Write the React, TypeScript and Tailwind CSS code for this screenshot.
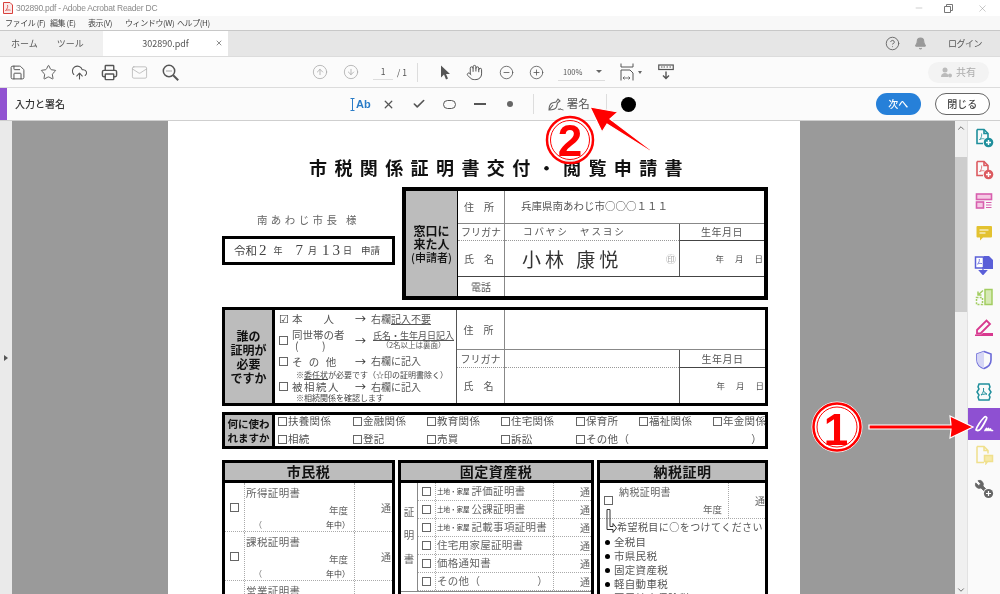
import React from 'react';
import {
  Save, Star, CloudUpload, Printer, Mail, CircleArrowUp, CircleArrowDown,
  Hand, CircleMinus, CirclePlus, CircleHelp, Bell, X, Check, Minus, Wrench, ChevronUp, ChevronDown,
} from 'lucide-react';

const DocPlus: React.FC<{ color: string }> = ({ color }) => (
  <svg width="20" height="20" viewBox="0 0 20 20" fill="none" stroke={color} strokeWidth="1.6">
    <path d="M3 1.5h7l4 4v5M3 1.5v14h6" />
    <path d="M10 1.5v4h4" />
    <path d="M5.5 12c2-2 2.5-5 2-6.5M5.5 11.5c2-1 4-1 5-.5" strokeWidth="0.8" />
    <circle cx="14.5" cy="14.5" r="4.8" fill={color} stroke="none" />
    <path d="M12 14.5h5M14.5 12v5" stroke="#fff" strokeWidth="1.4" />
  </svg>
);

const RailIcons: { key: string; node: React.ReactNode }[] = [
  { key: 'create', node: <DocPlus color="#1f8f9c" /> },
  { key: 'combine', node: <DocPlus color="#dc5a60" /> },
  {
    key: 'layout',
    node: (
      <svg width="18" height="18" viewBox="0 0 18 18" fill="none" stroke="#d85fae" strokeWidth="1.6">
        <rect x="1.5" y="2" width="15" height="5.5" fill="#f5c9e4" />
        <rect x="1.5" y="10" width="7" height="6" fill="#f5c9e4" />
        <path d="M11 10.5h5.5M11 13h5.5M11 15.5h5.5" strokeWidth="1" />
      </svg>
    ),
  },
  {
    key: 'comment',
    node: (
      <svg width="18" height="18" viewBox="0 0 18 18">
        <path d="M2.5 2h13.5a1 1 0 0 1 1 1v9.5a1 1 0 0 1-1 1H8l-3 3v-3H2.5a1 1 0 0 1-1-1V3a1 1 0 0 1 1-1z" fill="#e3c230" />
        <path d="M4.5 6h9M4.5 9h6" stroke="#fff" strokeWidth="1.2" />
      </svg>
    ),
  },
  {
    key: 'export',
    node: (
      <svg width="20" height="20" viewBox="0 0 20 20">
        <path d="M10 1h5l4 4v9h-9z" fill="#5a5fd8" />
        <path d="M1.5 2h8v11h-8z" fill="#fff" stroke="#5a5fd8" strokeWidth="1.5" />
        <path d="M3.5 9c1.5-1 2-3 1.8-5M3.5 9c1.5-.6 3-.8 4.5-.4" stroke="#5a5fd8" strokeWidth="0.8" fill="none" />
        <path d="M9 12v4M5.5 15.5h7L9 19.5z" fill="#5a5fd8" stroke="#5a5fd8" strokeWidth="1.2" />
      </svg>
    ),
  },
  {
    key: 'organize',
    node: (
      <svg width="18" height="18" viewBox="0 0 18 18" fill="none" stroke="#a2cd61" strokeWidth="1.5">
        <rect x="10" y="1.5" width="7" height="15" fill="#d6eab4" />
        <path d="M1.5 9.5h6v7h-6z" strokeDasharray="2 1.2" />
        <path d="M8 2.5L3 7M3 3.5V7h3.5" />
      </svg>
    ),
  },
  {
    key: 'fill',
    node: (
      <svg width="20" height="18" viewBox="0 0 20 18">
        <path d="M3 11L12.5 1.5 16 5 6.5 14.5H3z" fill="none" stroke="#d8398f" strokeWidth="1.8" />
        <path d="M9 14h10v3H1v-1.5h6z" fill="#d8398f" />
      </svg>
    ),
  },
  {
    key: 'protect',
    node: (
      <svg width="18" height="20" viewBox="0 0 18 20">
        <path d="M9 1.5l7 2.5v6c0 4-3 7-7 8.5-4-1.5-7-4.500-7-8.5V4z" fill="none" stroke="#6b6ad8" strokeWidth="1.6" />
        <path d="M9 1.5v17c-4-1.5-7-4.500-7-8.5V4z" fill="#d6d6f5" />
      </svg>
    ),
  },
  {
    key: 'optimize',
    node: (
      <svg width="20" height="20" viewBox="0 0 20 20" fill="none" stroke="#1f8f9c" strokeWidth="1.5">
        <path d="M5 2h10l1 3-1 2 2 3-2 3 1 2-1 3H5l-1-3 1-2-2-3 2-3-1-2z" />
        <path d="M7 13c2-2 3-4 2.5-7M7 13c2-.8 4-1.2 6-.8M9.5 9c.8 1.2 2 2.4 3.5 3.2" strokeWidth="1" />
      </svg>
    ),
  },
  {
    key: 'sign',
    node: (
      <svg width="20" height="20" viewBox="0 0 20 20" fill="none" stroke="#fff" strokeWidth="1.7" strokeLinecap="round" strokeLinejoin="round">
        <path d="M2 16c.5-3 5-9.5 8-12.5 1.5-1.5 3.5-.5 2.5 1.5-1.5 3-4 7.5-5.5 9.5-1 1.5-3 2.5-5 1.5z" />
        <path d="M11 16.5l1.5-2 .5 2 1.5-2 .5 2 1.5-1.5.5 1.5h1.5" />
      </svg>
    ),
  },
  {
    key: 'send',
    node: (
      <svg width="20" height="20" viewBox="0 0 20 20" fill="none" stroke="#f0e08c" strokeWidth="1.5">
        <path d="M3 1.5h7l4 4v3M3 1.5v16h7M10 1.5v4h4" />
        <path d="M10.5 10.5h8v6h-5l-1.5 2v-2h-1.5z" fill="#f6eaa8" />
      </svg>
    ),
  },
  {
    key: 'tools',
    node: (
      <span className="relative mt-[3px] block h-[20px] w-[20px]">
        <Wrench size={16} className="absolute left-0 top-0 -scale-x-100 text-[#666]" fill="#666" strokeWidth={1.2} />
        <svg className="absolute bottom-0 right-0" width="11" height="11" viewBox="0 0 11 11">
          <circle cx="5.5" cy="5.5" r="5.5" fill="#fafafa" />
          <circle cx="5.5" cy="5.5" r="4.6" fill="#666" />
          <path d="M3 5.5h5M5.5 3v5" stroke="#fff" strokeWidth="1.2" />
        </svg>
      </span>
    ),
  },
];

const Box = () => <span className="inline-block h-[9px] w-[9px] shrink-0 border border-[#666]" />;

const PurposeRow: React.FC<{ items: string[] }> = ({ items }) => (
  <div className="grid h-[13px] grid-cols-[75px_74px_74px_75px_63px_74px_1fr] items-center pl-[3px] text-[10.5px] leading-none text-[#555]">
    {items.map((it, i) => (
      <span key={i} className="flex items-center gap-[1px] whitespace-nowrap tracking-[0.3px]">
        {it !== '' && it !== '）' && <Box />}
        {it === '）' ? <span className="ml-auto pr-[3px]">）</span> : it}
      </span>
    ))}
  </div>
);

const WhoRow: React.FC<{ h: string; check?: React.ReactNode; mid: React.ReactNode; right?: React.ReactNode }> = ({ h, check, mid, right }) => (
  <div className={`grid grid-cols-[17px_63px_16px_1fr] items-center ${h}`}>
    <span className="flex justify-center">{check}</span>
    <div className="whitespace-nowrap text-[10.5px] leading-[11px] text-[#555]">{mid}</div>
    {right ? <span className="text-[11px] leading-none text-[#333]">→</span> : <span />}
    <div className="whitespace-nowrap text-[10px] leading-[10px] text-[#555]">{right}</div>
  </div>
);

const Note: React.FC<{ h: string; children: React.ReactNode }> = ({ h, children }) => (
  <div className={`flex items-center whitespace-nowrap pl-[21px] text-[8px] leading-none text-[#444] ${h}`}>{children}</div>
);

const TaxHead: React.FC<{ title: string }> = ({ title }) => (
  <div className="flex h-[23px] items-center justify-center border-[3px] border-black bg-[#bcbcbc] text-[14px] font-bold tracking-[0.5px] text-[#111]">
    {title}
  </div>
);

const CityRow: React.FC<{ title: string; h: string }> = ({ title, h }) => (
  <div className={`grid grid-cols-[20px_110px_1fr] border-b border-dotted border-[#aaa] ${h}`}>
    <span className="flex items-center justify-center border-r border-dotted border-[#aaa]"><Box /></span>
    <div className="flex flex-col border-r border-dotted border-[#aaa] px-[1px] text-[#666]">
      <span className="mt-[4px] text-[10.5px] leading-[12px] tracking-[0.4px]">{title}</span>
      <span className="mt-[6px] pr-[5px] text-right text-[9.5px] leading-[11px]">年度</span>
      <span className="mt-[4px] flex justify-between pl-[8px] pr-[3px] text-[8px] leading-[10px]"><span>（</span><span className="text-[#333]">年中）</span></span>
    </div>
    <span className="flex items-center justify-end pr-[1px] text-[10px] text-[#666]">通</span>
  </div>
);

const AssetRow: React.FC<{ children: React.ReactNode }> = ({ children }) => (
  <div className="grid h-[18px] grid-cols-[18px_118px_1fr] border-b border-dotted border-[#aaa]">
    <span className="flex items-center justify-center border-r border-dotted border-[#aaa]"><Box /></span>
    <div className="flex items-center gap-[2px] whitespace-nowrap border-r border-dotted border-[#aaa] pl-[1px] text-[10.5px] leading-none tracking-[0.3px] text-[#666]">{children}</div>
    <span className="flex items-center justify-end pr-[1px] text-[10px] leading-none text-[#666]">通</span>
  </div>
);

const Land = () => <span className="text-[6.5px] tracking-normal text-[#333]">土地・家屋</span>;

const Annotations = () => (
  <svg className="pointer-events-none absolute left-0 top-0" width="1000" height="594" viewBox="0 0 1000 594">
    <g>
      <path d="M651 150L610 119 618 112 590 107 602 132 607 124 650 151z" fill="#f00" stroke="#fff" strokeWidth="1.2" />
      <circle cx="570" cy="140" r="23" fill="#fff" fillOpacity="0.9" stroke="#f00" strokeWidth="2.5" />
      <circle cx="570" cy="140" r="19.5" fill="none" stroke="#f00" strokeWidth="1" />
      <text x="570" y="156" textAnchor="middle" fontSize="44" fontWeight="700" fill="#f00" fontFamily="'Liberation Sans', sans-serif">2</text>
    </g>
    <g>
      <path d="M869 425L951 425 950 416 973 427 950 438 951 429 869 429z" fill="#f00" stroke="#fff" strokeWidth="1.2" />
      <circle cx="837" cy="427" r="25" fill="#fff" stroke="#fff" />
      <circle cx="837" cy="427" r="23.5" fill="none" stroke="#f00" strokeWidth="2.5" />
      <circle cx="837" cy="427" r="20" fill="none" stroke="#f00" strokeWidth="1" />
      <text x="836" y="445" textAnchor="middle" fontSize="44" fontWeight="700" fill="#f00" fontFamily="'Liberation Sans', sans-serif">1</text>
    </g>
  </svg>
);

const App: React.FC = () => {
  return (
    <div className="relative flex h-[594px] w-[1000px] flex-col overflow-hidden bg-white font-['Noto_Sans_CJK_JP','Noto_Sans',sans-serif] blur-[0.4px]">
      {/* title bar */}
      <div className="flex h-[16px] shrink-0 items-center bg-white pl-[3px] text-[#8a8a8a]">
        <svg width="10" height="12" viewBox="0 0 10 12" fill="none" stroke="#d8413c">
          <path d="M.5.5h6.5l2.5 2.5v8.500h-9z" fill="#fbeaea" />
          <path d="M2.5 8.5c2-1.5 2.5-4 2-5.500M2.500 8.500c1.500-.6 3.500-.8 5-.3" strokeWidth="0.8" />
        </svg>
        <span className="ml-[3px] whitespace-nowrap font-['Liberation_Sans'] text-[8.5px] leading-none tracking-[-0.25px]">302890.pdf - Adobe Acrobat Reader DC</span>
        <div className="ml-auto flex items-center">
          <Minus size={10} strokeWidth={1} className="mr-[20px]" />
          <svg width="9" height="9" viewBox="0 0 9 9" fill="none" stroke="#777" className="mr-[24px]"><path d="M.5 2.5h6v6h-6zM2.500 2.500v-2h6v6h-2" /></svg>
          <X size={11} strokeWidth={1} className="mr-[12px]" />
        </div>
      </div>
      {/* menu */}
      <div className="flex h-[14px] shrink-0 items-center bg-[#f8f8f8] pl-[5px] text-[8px] leading-none tracking-[-0.4px] text-[#444]">
        <span className="w-[45px]">ファイル (F)</span>
        <span className="w-[38px]">編集 (E)</span>
        <span className="w-[37px]">表示(V)</span>
        <span className="w-[52px]">ウィンドウ(W)</span>
        <span>ヘルプ(H)</span>
      </div>
      {/* tabs */}
      <div className="flex h-[26px] shrink-0 items-stretch border-t border-[#c8c8c8] bg-[#e6e6e6]">
        <div className="flex w-[103px] items-center gap-[19px] bg-[#f0f0f0] pl-[11px] text-[9px] leading-none text-[#555]">
          <span>ホーム</span><span>ツール</span>
        </div>
        <div className="relative flex w-[125px] items-center justify-center bg-white text-[9px] leading-none text-[#555]">
          302890.pdf
          <X size={8} strokeWidth={2} className="absolute right-[5px] top-[8px] text-[#555]" />
        </div>
        <div className="ml-auto flex items-center pr-[18px] text-[#666]">
          <CircleHelp size={15} strokeWidth={1.5} />
          <Bell size={13} fill="#999" className="ml-[14px] text-[#999]" />
          <span className="ml-[21px] text-[9px] leading-none tracking-[-0.5px] text-[#555]">ログイン</span>
        </div>
      </div>
      {/* main toolbar */}
      <div className="flex h-[32px] shrink-0 items-center border-y border-[#dcdcdc] bg-[#fbfbfb] text-[#555]">
        <Save size={17} strokeWidth={1.4} className="ml-[9px]" />
        <Star size={17} strokeWidth={1.3} className="ml-[14px]" />
        <CloudUpload size={17} strokeWidth={1.5} className="ml-[14px]" />
        <Printer size={17} strokeWidth={2} className="ml-[13px]" />
        <Mail size={17} strokeWidth={1} className="ml-[13px] text-[#aaa]" />
        <svg width="17" height="17" viewBox="0 0 17 17" fill="none" stroke="#555" strokeWidth="1.5" className="ml-[14px]">
          <circle cx="7" cy="7" r="5.7" />
          <path d="M11.2 11.2l5 5" strokeWidth="2" />
          <path d="M4.5 7h1M6.5 7h1M8.5 7h1" strokeWidth="1.1" />
        </svg>
        <CircleArrowUp size={16} strokeWidth={1.2} className="ml-[133px] text-[#aaa]" />
        <CircleArrowDown size={16} strokeWidth={1.2} className="ml-[15px] text-[#aaa]" />
        <span className="ml-[14px] flex h-[16px] w-[20px] items-center justify-center border-b border-[#ddd] text-[8.5px] leading-none">1</span>
        <span className="ml-[4px] whitespace-nowrap text-[8.5px] leading-none">/ 1</span>
        <span className="ml-[10px] h-[19px] w-px bg-[#ddd]" />
        <svg width="10" height="15" viewBox="0 0 10 15" className="ml-[22px]"><path d="M1 .5v12l3-3 2 5 2-1-2-4.5h4z" fill="#555" /></svg>
        <Hand size={17} strokeWidth={1.4} className="ml-[16px]" />
        <CircleMinus size={15} strokeWidth={1.3} className="ml-[16px]" />
        <CirclePlus size={15} strokeWidth={1.3} className="ml-[15px]" />
        <div className="ml-[14px] flex h-[17px] w-[47px] items-center justify-between border-b border-[#ddd] pl-[5px] pr-[3px] text-[7.5px] leading-none">
          <span>100%</span>
          <span className="h-0 w-0 border-x-[3px] border-t-[3px] border-x-transparent border-t-[#666]" />
        </div>
        <svg width="15" height="18" viewBox="0 0 15 18" fill="none" stroke="#555" className="ml-[15px]">
          <path d="M1 .5v3.5h12V.5M1 17.5V7h9l3 3v7.5" />
          <path d="M3 15h7M3 15l1.5-1.5M3 15l1.5 1.5M10 15l-1.5-1.5M10 15l-1.5 1.5" strokeWidth="0.8" />
        </svg>
        <span className="ml-[3px] h-0 w-0 border-x-[2.5px] border-t-[3px] border-x-transparent border-t-[#666]" />
        <svg width="16" height="16" viewBox="0 0 16 16" fill="none" stroke="#555" className="ml-[16px]">
          <rect x=".75" y="1" width="14.5" height="4.5" strokeWidth="1.2" />
          <path d="M3 3h1.5M5.5 3H7M8.5 3H10M11.5 3H13" strokeWidth="1" />
          <path d="M8 7.5v7M5 11.5l3 3 3-3" strokeWidth="1.4" />
        </svg>
        <div className="ml-auto mr-[11px] flex h-[21px] w-[61px] items-center justify-center gap-[4px] rounded-full bg-[#f3f3f3] text-[10px] leading-none text-[#aaa]">
          <svg width="11" height="11" viewBox="0 0 11 11" fill="#bbb"><circle cx="4" cy="3" r="2.5" /><path d="M0 10c0-3 2-4 4-4s3 1 3 2v2z" /><circle cx="9" cy="8.5" r="2" /></svg>
          <span>共有</span>
        </div>
      </div>
      {/* fill & sign toolbar */}
      <div className="flex h-[33px] shrink-0 items-center border-b border-[#cfcfcf] bg-[#fbfbfb] text-[#555]">
        <span className="h-full w-[7px] bg-[#9153d1]" />
        <span className="ml-[8px] w-[47px] whitespace-nowrap text-[10px] font-medium leading-none text-[#333]">入力と署名</span>
        <span className="ml-[288px] flex items-center whitespace-nowrap font-['Liberation_Sans'] text-[11px] font-bold leading-none text-[#2a7cc7]">
          <svg width="5" height="13" viewBox="0 0 5 13" fill="none" stroke="#2a7cc7" className="mr-px"><path d="M.5.5h4M2.5.5v12M.5 12.5h4" /></svg>
          Ab
        </span>
        <X size={13} strokeWidth={2.4} className="ml-[11px]" />
        <Check size={14} strokeWidth={2.8} className="ml-[17px]" />
        <span className="ml-[17px] h-[9px] w-[13px] rounded-full border-[1.5px] border-[#555]" />
        <span className="ml-[18px] h-[2px] w-[12px] bg-[#555]" />
        <span className="ml-[21px] h-[6px] w-[6px] rounded-full bg-[#666]" />
        <span className="ml-[20px] h-[20px] w-px bg-[#ddd]" />
        <svg width="16" height="15" viewBox="0 0 16 15" fill="none" stroke="#666" strokeWidth="1.1" className="ml-[14px]">
          <path d="M1 13c0-3 1-6 3-7l4-1 2-3 2 2-2.5 2-1 4c-1 2-4 3-7.5 3zM1 13l4-5" />
          <path d="M10 13l1-1.5.5 1.5 1-1.5.5 1.5 1-1 .5 1h1" strokeWidth="0.8" />
        </svg>
        <span className="ml-[3px] text-[11.5px] leading-none text-[#555]">署名</span>
        <span className="ml-[16px] h-[20px] w-px bg-[#ddd]" />
        <span className="ml-[14px] h-[15px] w-[15px] rounded-full bg-black" />
        <span className="ml-[240px] flex h-[22px] w-[45px] items-center justify-center rounded-full bg-[#2680d9] text-[10px] font-medium leading-none text-white">次へ</span>
        <span className="ml-[14px] flex h-[22px] w-[55px] items-center justify-center rounded-full border border-[#666] bg-white text-[10px] font-medium leading-none text-[#444]">閉じる</span>
      </div>
      {/* body */}
      <div className="flex min-h-0 flex-1">
        <div className="flex w-[12px] shrink-0 items-center justify-center bg-[#eaeaea]">
          <span className="h-0 w-0 border-y-[3.5px] border-l-[4px] border-y-transparent border-l-[#555]" />
        </div>
        <div className="flex min-w-0 flex-1 justify-center overflow-hidden bg-[#9a9a9a]">
          <div className="ml-[1px] flex w-[632px] shrink-0 flex-col overflow-hidden bg-white pl-[54px] pr-[32px] pt-[33px]">
            <div className="flex h-[26px] shrink-0 items-center justify-center whitespace-nowrap pl-[9px] text-[18px] font-bold leading-none tracking-[7.4px] text-[#111]">
              市税関係証明書交付・閲覧申請書
            </div>
            {/* applicant */}
            <div className="mt-[7px] flex shrink-0">
              <div className="flex w-[180px] flex-col">
                <div className="mt-[26px] flex h-[14px] items-center justify-center whitespace-nowrap pr-[7px] text-[10.5px] leading-none tracking-[3.4px] text-[#666]">南あわじ市長 様</div>
                <div className="mt-[9px] flex h-[29px] w-[173px] items-center whitespace-nowrap border-[3px] border-black pl-[9px] text-[#444]">
                  <span className="text-[11.5px] leading-none">令和</span>
                  <span className="ml-[2px] font-['Liberation_Serif'] text-[15px] leading-none">2</span>
                  <span className="ml-[7px] text-[9px] leading-none">年</span>
                  <span className="ml-[13px] font-['Liberation_Serif'] text-[15px] leading-none">7</span>
                  <span className="ml-[5px] text-[9px] leading-none">月</span>
                  <span className="ml-[5px] font-['Liberation_Serif'] text-[15px] leading-none tracking-[3px]">13</span>
                  <span className="text-[9px] leading-none">日</span>
                  <span className="ml-[9px] text-[9.5px] leading-none">申請</span>
                </div>
              </div>
              <div className="flex h-[113px] w-[366px] border-4 border-black">
                <div className="flex w-[52px] items-center justify-center border-r border-black bg-[#bcbcbc] text-center text-[12px] font-bold leading-[13px] text-[#111]">
                  <span>窓口に<br />来た人<br /><span className="text-[11px] font-medium">(申請者)</span></span>
                </div>
                <div className="flex min-w-0 flex-1 flex-col text-[#555]">
                  <div className="flex h-[33px] border-b border-[#888]">
                    <span className="flex w-[47px] items-center justify-center border-r border-[#888] text-[10px] leading-none tracking-[4px]">住 所</span>
                    <span className="flex items-center pb-[1px] pl-[16px] text-[10.5px] leading-none">兵庫県南あわじ市○○○１１１</span>
                  </div>
                  <div className="flex h-[53px] border-b border-[#444]">
                    <div className="flex w-[47px] flex-col border-r border-[#888] text-center text-[10px] leading-none">
                      <span className="flex h-[17px] items-center justify-center border-b border-dotted border-[#999]">フリガナ</span>
                      <span className="flex flex-1 items-center justify-center tracking-[4px]">氏 名</span>
                    </div>
                    <div className="flex w-[175px] flex-col border-r border-[#555]">
                      <span className="flex h-[17px] items-center whitespace-nowrap border-b border-dotted border-[#999] pl-[18px] text-[9.5px] leading-none tracking-[1.9px]">コバヤシ　ヤスヨシ</span>
                      <div className="flex flex-1 items-center justify-between pl-[17px] pr-[3px]">
                        <span className="whitespace-nowrap text-[19px] leading-none tracking-[4px] text-[#333]">小林 康悦</span>
                        <span className="text-[10px] leading-none text-[#aaa]">㊞</span>
                      </div>
                    </div>
                    <div className="flex flex-1 flex-col">
                      <span className="flex h-[17px] items-center justify-center border-b border-[#444] text-[10px] leading-none tracking-[0.5px]">生年月日</span>
                      <span className="flex flex-1 items-center justify-end gap-[11px] pr-[1px] text-[8.5px] leading-none"><span>年</span><span>月</span><span>日</span></span>
                    </div>
                  </div>
                  <div className="flex flex-1">
                    <span className="flex w-[47px] items-center justify-center border-r border-[#888] text-[10px] leading-none">電話</span>
                  </div>
                </div>
              </div>
            </div>
            {/* who needs it */}
            <div className="mt-[7px] flex h-[99px] shrink-0 border-[3.5px] border-black">
              <div className="flex w-[50px] items-center justify-center border-r-[3px] border-black bg-[#bcbcbc] text-center text-[12px] font-bold leading-[14px] text-[#111]">
                <span>誰の<br />証明が<br />必要<br />ですか</span>
              </div>
              <div className="flex w-[182px] flex-col border-r border-[#555]">
                <WhoRow h="h-[17px]" check={<span className="text-[11px] leading-none text-[#333]">☑</span>} mid={<span>本　　人</span>} right={<span>右欄<u>記入不要</u></span>} />
                <WhoRow h="h-[26px]" check={<Box />} mid={<span>同世帯の者<br /><span className="pl-[3px]">(　　 )</span></span>} right={<span className="flex flex-col items-center text-[9px] leading-[9px]"><u>氏名・生年月日記入</u><span className="text-[7.5px]">（2名以上は裏面）</span></span>} />
                <WhoRow h="h-[16px]" check={<Box />} mid={<span className="tracking-[2px]">そ の 他</span>} right={<span>右欄に記入</span>} />
                <Note h="h-[11px]"><span>※<u>委任状</u>が必要です（☆印の証明書除く）</span></Note>
                <WhoRow h="h-[13px]" check={<Box />} mid={<span className="tracking-[1.5px]">被相続人</span>} right={<span>右欄に記入</span>} />
                <Note h="h-[10px]"><span>※相続関係を確認します</span></Note>
              </div>
              <div className="flex min-w-0 flex-1 flex-col text-[#555]">
                <div className="flex h-[40px] border-b border-[#888]">
                  <span className="flex w-[48px] items-center justify-center border-r border-[#888] text-[10px] leading-none tracking-[4px]">住 所</span>
                </div>
                <div className="flex flex-1">
                  <div className="flex w-[48px] flex-col border-r border-[#888] text-center text-[10px] leading-none">
                    <span className="flex h-[18px] items-center justify-center border-b border-dotted border-[#999]">フリガナ</span>
                    <span className="flex flex-1 items-center justify-center tracking-[4px]">氏 名</span>
                  </div>
                  <div className="flex w-[175px] flex-col border-r border-[#555]">
                    <span className="h-[18px] border-b border-dotted border-[#999]" />
                  </div>
                  <div className="flex flex-1 flex-col">
                    <span className="flex h-[18px] items-center justify-center border-b border-[#444] text-[10px] leading-none tracking-[0.5px]">生年月日</span>
                    <span className="flex flex-1 items-center justify-end gap-[11px] pr-[1px] text-[8.5px] leading-none"><span>年</span><span>月</span><span>日</span></span>
                  </div>
                </div>
              </div>
            </div>
            {/* purpose */}
            <div className="mt-[6px] flex h-[37px] shrink-0 border-[3px] border-black">
              <div className="flex w-[50px] items-center justify-center border-r-[3px] border-black bg-[#bcbcbc] text-center text-[10.5px] font-bold leading-[14px] text-[#111]">
                <span>何に使わ<br />れますか</span>
              </div>
              <div className="flex min-w-0 flex-1 flex-col justify-center gap-[5px]">
                <PurposeRow items={['扶養関係', '金融関係', '教育関係', '住宅関係', '保育所', '福祉関係', '年金関係']} />
                <PurposeRow items={['相続', '登記', '売買', '訴訟', 'その他（', '', '）']} />
              </div>
            </div>
            {/* tax columns */}
            <div className="mt-[11px] grid shrink-0 grid-cols-[173px_196px_171px] gap-x-[3px]">
              <div className="flex flex-col">
                <TaxHead title="市民税" />
                <div className="border-x-[3px] border-black">
                  <CityRow title="所得証明書" h="h-[49px]" />
                  <CityRow title="課税証明書" h="h-[49px]" />
                  <CityRow title="営業証明書" h="h-[40px]" />
                </div>
              </div>
              <div className="flex flex-col">
                <TaxHead title="固定資産税" />
                <div className="flex h-[120px] flex-col border-x-[3px] border-black">
                  <div className="flex border-b border-[#888]">
                    <div className="flex h-[108px] w-[17px] shrink-0 flex-col items-center justify-between border-r border-[#888] pb-[27px] pt-[24px] text-[10.5px] leading-none text-[#666]">
                      <span>証</span><span>明</span><span>書</span>
                    </div>
                    <div className="min-w-0 flex-1">
                      <AssetRow><Land />評価証明書</AssetRow>
                      <AssetRow><Land />公課証明書</AssetRow>
                      <AssetRow><Land />記載事項証明書</AssetRow>
                      <AssetRow>住宅用家屋証明書</AssetRow>
                      <AssetRow>価格通知書</AssetRow>
                      <AssetRow><span className="flex w-full justify-between pr-[5px]"><span>その他（</span><span>）</span></span></AssetRow>
                    </div>
                  </div>
                </div>
              </div>
              <div className="flex flex-col">
                <TaxHead title="納税証明" />
                <div className="h-[120px] border-x-[3px] border-black">
                  <div className="grid h-[36px] grid-cols-[16px_113px_1fr] border-b border-dotted border-[#aaa]">
                    <span className="flex items-center justify-center"><Box /></span>
                    <div className="flex flex-col border-r border-dotted border-[#aaa] pl-[3px] text-[#666]">
                      <span className="mt-[3px] text-[10px] leading-[12px] tracking-[0.4px]">納税証明書</span>
                      <span className="mt-[6px] pr-[6px] text-right text-[9.5px] leading-[11px]">年度</span>
                    </div>
                    <span className="flex items-center justify-end text-[10px] text-[#666]">通</span>
                  </div>
                  <div className="relative flex h-[16px] items-center whitespace-nowrap pl-[17px] text-[10px] leading-none tracking-[0.45px] text-[#555]">
                    希望税目に○をつけてください
                    <svg className="absolute -top-[10px] left-[5px]" width="12" height="24" viewBox="0 0 12 24" fill="none" stroke="#333"><path d="M2 .5h3v17h3v-3l3.5 4.5L8 23.5v-3H2z" /></svg>
                  </div>
                  {['全税目', '市県民税', '固定資産税', '軽自動車税', '国民健康保険税'].map(t => (
                    <div key={t} className="flex h-[14px] items-center gap-[4px] pl-[5px] text-[10.5px] leading-none tracking-[0.3px] text-[#555]">
                      <span className="h-[5px] w-[5px] rounded-full bg-black" />{t}
                    </div>
                  ))}
                </div>
              </div>
            </div>
          </div>
        </div>
        {/* scrollbar */}
        <div className="flex w-[12px] shrink-0 flex-col items-center justify-between bg-[#f0f0f0]">
          <ChevronUp size={10} strokeWidth={2} className="mt-[2px] text-[#555]" />
          <span className="absolute left-[955px] top-[157px] h-[155px] w-[12px] bg-[#cdcdcd]" />
          <ChevronDown size={10} strokeWidth={2} className="-mb-[1px] text-[#555]" />
        </div>
        {/* right rail */}
        <div className="flex w-[33px] shrink-0 flex-col items-stretch border-l border-[#e2e2e2] bg-[#fafafa] pt-[1px]">
          {RailIcons.map(icon => (
            <div key={icon.key} className={`flex h-[31.75px] items-center justify-center ${icon.key === 'sign' ? 'bg-[#8e50d2]' : ''}`}>
              {icon.node}
            </div>
          ))}
        </div>
      </div>
      <Annotations />
    </div>
  );
};

export default App;
